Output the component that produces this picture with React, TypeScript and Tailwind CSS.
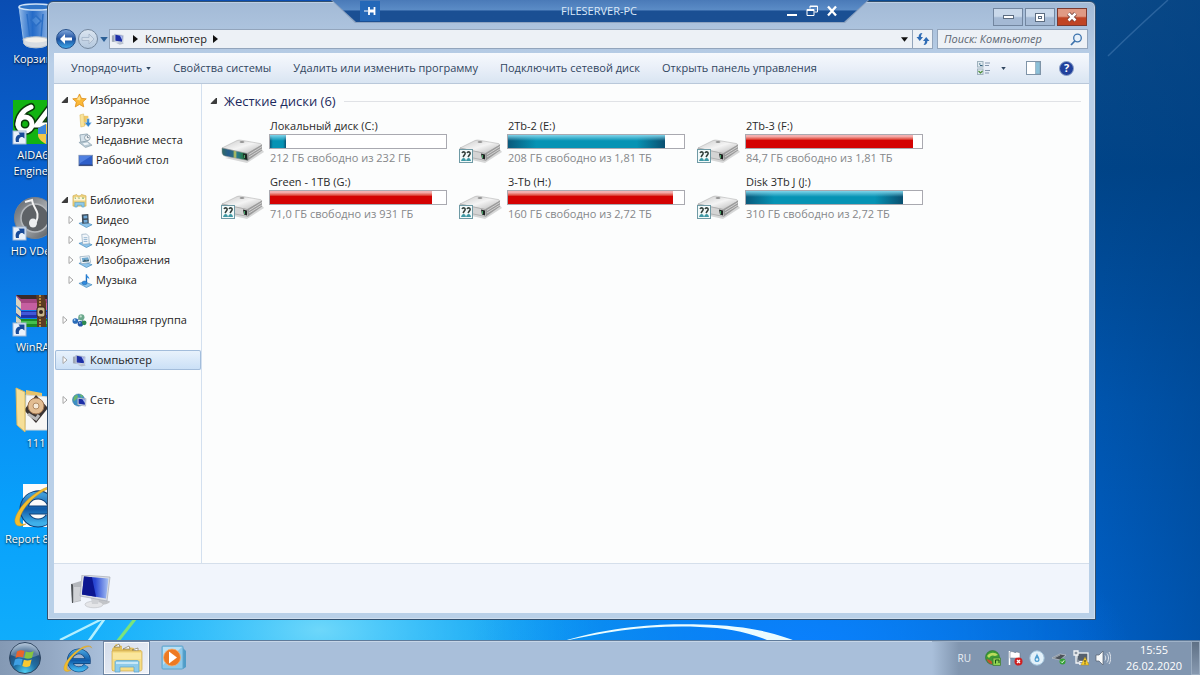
import React from 'react';

type IconProps = { className?: string };

/* ---------- Desktop icons ---------- */

const ShortcutBadge = () => (
  <g>
    <rect x="1" y="33" width="13" height="13" fill="#e9f1fb" stroke="#9fb6d4" strokeWidth="1" />
    <path d="M4 44c-1-4 0-7 4-7.500l-1.500-2h6v6l-2-1.500c-3 0-4 2-3.500 5z" fill="#184a98" />
  </g>
);

const RecycleBinIcon = ({ className }: IconProps) => (
  <svg viewBox="0 0 48 48" className={className}>
    <defs>
      <linearGradient id="bin" x1="0" x2="1">
        <stop offset="0" stopColor="#b9d6f4" stopOpacity="0.8" />
        <stop offset="0.4" stopColor="#3f86da" stopOpacity="0.5" />
        <stop offset="1" stopColor="#dcebfb" stopOpacity="0.8" />
      </linearGradient>
    </defs>
    <path d="M7 5l5 37c3 5 21 5 24 0l5-37z" fill="url(#bin)" stroke="#8fb9e8" strokeWidth="1" />
    <path d="M15 12l3 24M31 12l-2 24M19 18l5-4 5 5-5 5z" stroke="#2b6fc6" strokeWidth="1.500" fill="#5c9ae0" fillOpacity="0.500" />
    <path d="M11 37c6-3 20-3 26 0l-1 5c-3 5-21 5-24 0z" fill="#d8dde2" stroke="#b9c3cc" />
    <ellipse cx="24" cy="38" rx="11" ry="2.500" fill="#f2f0ea" />
    <ellipse cx="24" cy="5" rx="17" ry="3" fill="#2f74c8" stroke="#cfe2f7" strokeWidth="1.500" />
  </svg>
);

const AidaIcon = ({ className }: IconProps) => (
  <svg viewBox="0 0 48 48" className={className}>
    <rect x="1" y="2" width="46" height="44" fill="#12b312" />
    <g fill="none" stroke="#0a3a0a" strokeWidth="8" strokeLinecap="round">
      <path d="M19 9c-8 3-13 10-13 18" />
      <circle cx="13" cy="26" r="7" />
      <path d="M38 34V10L25 27h18" />
    </g>
    <g fill="none" stroke="#fff" strokeWidth="5" strokeLinecap="round">
      <path d="M19 9c-8 3-13 10-13 18" />
      <circle cx="13" cy="26" r="7" />
      <path d="M38 34V10L25 27h18" />
    </g>
    <path d="M26 30l8-4 8 4v7c0 4-4 7-8 9-4-2-8-5-8-9z" fill="#f4c848" />
    <path d="M26 30l8-4v10h-8z" fill="#3b86dc" />
    <path d="M34 36h8c0 5-4 8-8 10z" fill="#3b86dc" />
    <ShortcutBadge />
  </svg>
);

const AudioDeckIcon = ({ className }: IconProps) => (
  <svg viewBox="0 0 48 48" className={className}>
    <defs>
      <linearGradient id="deck" x1="0" y1="0" x2="1" y2="1">
        <stop offset="0" stopColor="#5a5f64" />
        <stop offset="0.5" stopColor="#a6aaae" />
        <stop offset="1" stopColor="#4a4e52" />
      </linearGradient>
    </defs>
    <circle cx="23" cy="24" r="20.500" fill="url(#deck)" stroke="#7b8086" />
    <circle cx="23" cy="24" r="14" fill="#5e6266" stroke="#b4b8bc" strokeWidth="1.500" />
    <path d="M13 8l7-2c1 9 9 11 4 22" fill="none" stroke="#f3f3f3" strokeWidth="2" />
    <ellipse cx="21" cy="29" rx="4" ry="4.500" fill="#eceef0" />
    <ShortcutBadge />
  </svg>
);

const WinRarIcon = ({ className }: IconProps) => (
  <svg viewBox="0 0 48 48" className={className}>
    <path d="M4 5l38 0 5 7v8H9z" fill="#a3447f" />
    <path d="M4 5h38l4 4H9z" fill="#3a2a2a" />
    <path d="M9 13h38v7H9z" fill="#c65fa0" />
    <path d="M4 16l5 5h38v7H9l-5-4z" fill="#2030a8" />
    <path d="M9 22h38v3H9z" fill="#4258d8" />
    <path d="M4 26l5 3h38v8H9l-5-4z" fill="#1c8a26" />
    <path d="M9 31h38v3H9z" fill="#46c04c" />
    <path d="M4 6l5 6v7l-5-4zM4 16l5 5v6l-5-4zM4 26l5 4v6l-5-4z" fill="#d9d2bd" />
    <path d="M24 5h8l2 7v25h-9V12z" fill="#5d3c22" />
    <path d="M28 5v32" stroke="#d8a850" strokeWidth="1.500" strokeDasharray="2 1" />
    <rect x="25" y="17" width="8" height="10" rx="2" fill="#c9b68a" stroke="#33231a" />
    <circle cx="29" cy="22" r="2" fill="#33231a" />
    <ShortcutBadge />
  </svg>
);

const FolderDiskIcon = ({ className }: IconProps) => (
  <svg viewBox="0 0 48 48" className={className}>
    <path d="M14 4l16 3v8L14 40z" fill="#e6c36a" />
    <path d="M14 9l34 3v32H13z" fill="#f7f7f5" stroke="#d8d8d4" />
    <path d="M24 9l12 13-12 15-12-13z" fill="#3a3331" />
    <circle cx="24" cy="20" r="8" fill="#e2bd92" stroke="#9d7450" />
    <circle cx="24" cy="20" r="3" fill="#f5ead9" stroke="#b08a62" />
    <path d="M16 28l8 5 3-4" stroke="#b8b8b8" strokeWidth="3" fill="none" />
    <path d="M4 2l9 4v40l-8-7z" fill="#f6df98" stroke="#dcb95e" />
  </svg>
);

const IeGlyph = ({ id }: { id: string }) => (
  <g>
    <defs>
      <linearGradient id={id} x1="0" y1="0" x2="0" y2="1">
        <stop offset="0" stopColor="#3f9ad8" />
        <stop offset="0.5" stopColor="#0f5aa8" />
        <stop offset="1" stopColor="#3fb0ea" />
      </linearGradient>
    </defs>
    <path d="M14 28H40A14 14 0 1 0 37.500 35" fill="none" stroke="#0d3f78" strokeWidth="9" />
    <path d="M14 28H40A14 14 0 1 0 37.500 35" fill="none" stroke={`url(#${id})`} strokeWidth="7" />
    <path
      d="M46 8c-1-5-8-5-17 0C16 15 5 28 3 37c-1 7 4 9 11 5-5 1-7-1-6-6C10 27 20 16 30 10c8-5 14-6 16-2z"
      fill="#f2bd2e"
      stroke="#c9901a"
      strokeWidth="0.500"
    />
  </g>
);

const ReportIcon = ({ className }: IconProps) => (
  <svg viewBox="0 0 48 48" className={className}>
    <path d="M11 2h36v43H11z" fill="#fbfbfb" />
    <IeGlyph id="ie-report" />
  </svg>
);

/* ---------- Navigation pane icons ---------- */

const StarIcon = ({ className }: IconProps) => (
  <svg viewBox="0 0 16 16" className={className}>
    <path d="M8 1l2.100 4.700 5.100.5-3.800 3.500 1.100 5.100L8 12.200l-4.500 2.600 1.100-5.100L.8 6.200l5.100-.5z" fill="#fbb938" stroke="#d98a14" strokeWidth="0.800" />
    <path d="M8 3l1.300 3.500L8 8 5 7z" fill="#fee08e" />
  </svg>
);

const DownloadsIcon = ({ className }: IconProps) => (
  <svg viewBox="0 0 16 16" className={className}>
    <path d="M6 3h5v10H6z" fill="#efc868" />
    <path d="M2 2l4-1 1 13-4 1z" fill="#f8e39a" stroke="#d9b04e" strokeWidth="0.500" />
    <path d="M9.500 6H12v4h2.500L11 15 7 10h2.500z" fill="#2f83cf" stroke="#d5e8f8" strokeWidth="0.500" />
  </svg>
);

const RecentIcon = ({ className }: IconProps) => (
  <svg viewBox="0 0 16 16" className={className}>
    <path d="M2 2l8-1 1 7-8 2z" fill="#d6e2ea" stroke="#8299a8" strokeWidth="0.800" />
    <circle cx="10" cy="5" r="3" fill="#f3f6f8" stroke="#7c92a0" strokeWidth="0.800" />
    <path d="M10 3v2h2" stroke="#40586a" strokeWidth="0.700" fill="none" />
    <path d="M1 10l9-1 5 4-7 2.500z" fill="#b7c9d4" stroke="#7e95a4" strokeWidth="0.600" />
    <path d="M5 11l5-1 2 2-5 1z" fill="#eef4f8" />
  </svg>
);

const DesktopIcon = ({ className }: IconProps) => (
  <svg viewBox="0 0 16 16" className={className}>
    <rect x="1" y="2.500" width="14.500" height="11" fill="#2e5fc9" stroke="#7f93b4" strokeWidth="1" />
    <path d="M1.500 3h13L2 11z" fill="#4f80e0" />
    <path d="M1 13h14.500" stroke="#1f2f5c" strokeWidth="1" />
  </svg>
);

const LibrariesIcon = ({ className }: IconProps) => (
  <svg viewBox="0 0 16 16" className={className}>
    <path d="M1 3l4-1.500 1 1.500h3l1-1.500 5 1.500v11H1z" fill="#eed27e" stroke="#c9a548" strokeWidth="0.600" />
    <path d="M2 5l3-1 1.500 1 3-1 1.500 1 3 0v3H2z" fill="#fdf5d6" />
    <path d="M3 5.500h1M7 5.500h1M11 5.500h1.500" stroke="#3a8a3a" strokeWidth="1" />
    <path d="M3 10h10v5h-2.500v-2h-5v2H3z" fill="#8fcaea" stroke="#4f99c6" strokeWidth="0.600" />
  </svg>
);

const TrayBase = () => <path d="M1 11l6-1.500 8 3L9 15.500z" fill="#8ec4ea" stroke="#3f86bd" strokeWidth="0.700" />;

const VideoIcon = ({ className }: IconProps) => (
  <svg viewBox="0 0 16 16" className={className}>
    <TrayBase />
    <path d="M4 1.500l7-.5.500 10-7 .5z" fill="#3c4a58" />
    <path d="M5.800 3l4-.3.200 3-4 .2zM6 7.500l4-.3.200 3-4 .2z" fill="#6fa8d6" />
  </svg>
);

const DocumentsIcon = ({ className }: IconProps) => (
  <svg viewBox="0 0 16 16" className={className}>
    <TrayBase />
    <path d="M4 1.500l5-.5 2.500 2.500.500 8-7 .5z" fill="#f2f6fa" stroke="#8ba5bb" strokeWidth="0.700" />
    <path d="M6 5h4M6 7h4M6 9h4" stroke="#7aa3c6" strokeWidth="0.800" />
  </svg>
);

const PicturesIcon = ({ className }: IconProps) => (
  <svg viewBox="0 0 16 16" className={className}>
    <TrayBase />
    <path d="M2 4l10-1 1.500 7-10 1.500z" fill="#f5f9fc" stroke="#86a0b5" strokeWidth="0.700" />
    <path d="M4 5.200l7-.7.800 4.200-6.900 1z" fill="#6fa9cf" />
    <path d="M5 9l2-2 2 1 2.500-1 .3 1.700-6.900 1z" fill="#44606c" />
  </svg>
);

const MusicIcon = ({ className }: IconProps) => (
  <svg viewBox="0 0 16 16" className={className}>
    <TrayBase />
    <path d="M9 1.500v8.500" stroke="#1d6fc0" strokeWidth="1.500" />
    <path d="M9 1c.5 2.500 3.500 2.500 3 6-.6-1.600-1.500-2-3-2.300z" fill="#2f8ade" />
    <ellipse cx="7" cy="10.500" rx="2.700" ry="2" fill="#2f8ade" stroke="#175a9e" strokeWidth="0.500" />
  </svg>
);

const HomegroupIcon = ({ className }: IconProps) => (
  <svg viewBox="0 0 16 16" className={className}>
    <path d="M4 9l6-5 2 7z" fill="none" stroke="#7f9fb8" strokeWidth="1.500" />
    <circle cx="3.500" cy="8.500" r="3" fill="#2a6cb8" />
    <circle cx="10" cy="4.500" r="3.300" fill="#6aa88c" />
    <circle cx="9" cy="11.500" r="3" fill="#2456a8" />
    <circle cx="13" cy="10.500" r="2.500" fill="#2f8a52" />
    <circle cx="9.300" cy="3.600" r="1.200" fill="#c3e0d0" />
    <circle cx="2.800" cy="7.500" r="1" fill="#a9cdf0" />
    <circle cx="8.300" cy="10.500" r="1" fill="#8fb4ea" />
  </svg>
);

const ComputerSmallIcon = ({ className }: IconProps) => (
  <svg viewBox="0 0 16 16" className={className}>
    <path d="M1 4l3-.5v8L1 11z" fill="#9fa8b6" />
    <path d="M4 2.500l10 1.500-.5 8.500L4 11z" fill="#d7dde8" stroke="#9aa5b8" strokeWidth="0.500" />
    <path d="M5 3l8 1.500-.4 6.500L5 10z" fill="#1c2fa6" />
    <path d="M10 4l3 .5-.3 4.500z" fill="#aab9ee" />
    <path d="M6 12.500l5-.5 4 1.200-5 1.300z" fill="#b7bfcc" />
  </svg>
);

const NetworkIcon = ({ className }: IconProps) => (
  <svg viewBox="0 0 16 16" className={className}>
    <circle cx="7" cy="7.500" r="6.500" fill="#3c8fc4" stroke="#2c6d96" strokeWidth="0.500" />
    <path d="M3 3c3-2 4 0 3 2s-3 2-4 4c-1-2 0-5 1-6zM8 1l4 2-2 2z" fill="#69b86f" />
    <path d="M6 5l9 1-.5 8L6 12.500z" fill="#d7dde8" stroke="#8c98ac" strokeWidth="0.500" />
    <path d="M7 6l7 .8-.3 5.700L7 11.500z" fill="#1c2fa6" />
    <path d="M11 6.500l3 .3-.3 4.200z" fill="#aab9ee" />
  </svg>
);

/* ---------- Drive and detail icons ---------- */

const DriveIcon = ({ system }: { system?: boolean }) => (
  <svg viewBox="0 0 44 28" className="h-7 w-11 shrink-0" aria-hidden="true">
    <defs>
      <linearGradient id="drive-top" x1="0" y1="0" x2="1" y2="1">
        <stop offset="0" stopColor="#c9c9c9" />
        <stop offset="0.5" stopColor="#f4f4f4" />
        <stop offset="1" stopColor="#b4b4b4" />
      </linearGradient>
      <linearGradient id="drive-front" x1="0" x2="1">
        <stop offset="0" stopColor="#2f6a66" />
        <stop offset="0.25" stopColor="#255c8c" />
        <stop offset="0.42" stopColor="#2a6a80" />
        <stop offset="0.5" stopColor="#c8cc58" />
        <stop offset="0.58" stopColor="#2a7a90" />
        <stop offset="0.78" stopColor="#247a50" />
        <stop offset="1" stopColor="#262c2e" />
      </linearGradient>
    </defs>
    <path d="M4 22l22 5 17-11-3-4z" fill="#000" fillOpacity="0.150" />
    <path d="M1 12L16 4.500c1-.5 3-.5 4-.3l19 3.300c2 .4 2 1.500 1 2.200L26 17.500z" fill="url(#drive-top)" stroke="#a9a9a9" strokeWidth="0.500" />
    <path d="M26 17.500L41 8.500v6L27 24.500z" fill="#9b9b9b" />
    <path d="M28 18.500l13-8M28 21l13-8" stroke="#dedede" strokeWidth="0.800" />
    <path d="M1 12l25 5.500 1 7L4 20c-2-.5-3-2-3-4z" fill={system ? 'url(#drive-front)' : '#d4d4d4'} stroke="#8f8f8f" strokeWidth="0.500" />
    <path d="M22 17.500l4 1v5l-3-1z" fill="#1d2220" />
    <path d="M23.500 19v3" stroke="#52c87a" strokeWidth="0.800" />
    <ellipse cx="21" cy="6" rx="2.500" ry="0.800" fill="#777" />
    {!system && (
      <g>
        <rect x="0.500" y="13.500" width="13" height="13" fill="#f3fafa" stroke="#6f9aa5" />
        <path d="M3 17c1-2 4-1 3 1l-2 3M8 17c1-2 4-1 3 1l-2 3" stroke="#34403c" strokeWidth="1.500" fill="none" />
        <path d="M2 25c1-4 4.500-4 5 0zM7 25c1-4 4.500-4 5 0z" fill="#3f98a4" />
      </g>
    )}
  </svg>
);

const ComputerLargeIcon = ({ className }: IconProps) => (
  <svg viewBox="0 0 40 34" className={className}>
    <defs>
      <linearGradient id="screen" x1="0" x2="1">
        <stop offset="0" stopColor="#1522a6" />
        <stop offset="0.5" stopColor="#2b49d4" />
        <stop offset="1" stopColor="#a9c3f4" />
      </linearGradient>
    </defs>
    <path d="M0 9l10-3v20L1 28z" fill="#b4b7bc" />
    <path d="M0 9l2 .5V28L1 28z" fill="#4f5357" />
    <path d="M3 12h7v13l-7 2z" fill="#d0d2d6" />
    <path d="M26 24l12 2c3 1-2 4-8 4z" fill="#c2c4c8" />
    <ellipse cx="23" cy="29.500" rx="9" ry="3.300" fill="#e4e5e8" stroke="#b9bbc0" strokeWidth="0.600" />
    <path d="M20 23h8l-1 6h-6z" fill="#cfd1d5" />
    <path d="M11 0l28 2-3 24L9 21z" fill="#dcdfe4" stroke="#a6abb4" strokeWidth="0.700" />
    <path d="M13 1.500l24.500 2L35 23.500 11 19.500z" fill="url(#screen)" />
    <path d="M13 1.500l8 .7 4 19.500-14-2.200z" fill="#0c1690" />
  </svg>
);

/* ---------- Taskbar icons ---------- */

const StartOrb = () => (
  <svg viewBox="0 0 34 34" className="h-[34px] w-[34px]" aria-hidden="true">
    <defs>
      <radialGradient id="orb" cx="0.500" cy="0.950" r="0.900">
        <stop offset="0" stopColor="#4fd0f4" />
        <stop offset="0.4" stopColor="#1f6fa4" />
        <stop offset="0.75" stopColor="#24507c" />
        <stop offset="1" stopColor="#8faac6" />
      </radialGradient>
    </defs>
    <circle cx="17" cy="17" r="15.500" fill="url(#orb)" stroke="#2e4560" strokeWidth="1" />
    <path d="M3 14a14 12 0 0 1 28 0c-8 4-20 4-28 0z" fill="#fff" fillOpacity="0.250" />
    <path d="M9 10.500c3-1.500 5-1.500 7.500-.5L15 16.500c-2.500-1-5-.8-7.500.5z" fill="#e8642c" />
    <path d="M17.800 10.500c2.500 1.200 5 1 8-.5L24 16.800c-2.500 1.200-5 1.300-7.700.2z" fill="#86c440" />
    <path d="M7 18.500c2.500-1.200 5-1.300 7.600-.3L13 24.500c-2.500-1-4.800-.8-7.500.5z" fill="#3fa0e4" />
    <path d="M15.900 18.700c2.500 1.100 5 1 7.700-.2L22 25c-2.500 1.200-5 1.200-7.700 0z" fill="#f9c832" />
  </svg>
);

const ExplorerIcon = () => (
  <svg viewBox="0 0 34 30" className="h-[30px] w-[34px]" aria-hidden="true">
    <path d="M2 6l4-5 6 2v3h5l1-2 6 1v3l7-1v21H2z" fill="#e3c05c" />
    <path d="M4 4l5-3 1 3zM13 6l6-3 1 3zM22 7l6-2v3z" fill="#fff" stroke="#6e6545" strokeWidth="0.600" />
    <path d="M2 8h29c1 0 1 .5 1 1v17c0 1-.5 2-2 2H4c-1 0-2-.5-2-2z" fill="#f6dd85" stroke="#cda84a" strokeWidth="0.700" />
    <path d="M3 10h28v6H3z" fill="#fae69c" />
    <path d="M5 19c0-1 1-1.500 2-1.500h20c1 0 2 .5 2 1.500v10h-5v-5H10v5H5z" fill="#8ecbea" stroke="#5da3cc" strokeWidth="0.700" />
    <path d="M6 19h22v2H6z" fill="#c8e8f8" />
  </svg>
);

const MediaPlayerIcon = () => (
  <svg viewBox="0 0 26 26" className="h-[26px] w-[26px]" aria-hidden="true">
    <path d="M22 3l3 3v16l-3 2z" fill="#4f9cc8" />
    <rect x="1" y="1" width="21" height="23" rx="1" fill="#8cc8ea" stroke="#5fa4cc" />
    <path d="M2 2h19L2 20z" fill="#b9e0f5" />
    <circle cx="11" cy="12.500" r="8.500" fill="#ee7a22" stroke="#f5ad6c" strokeWidth="0.800" />
    <path d="M8 6.500l8 6-8 6z" fill="#fff" />
  </svg>
);

const TrayUtorrent = () => (
  <svg viewBox="0 0 16 16" className="h-4 w-4" aria-hidden="true">
    <circle cx="7.500" cy="7.500" r="7" fill="#3d9a36" stroke="#246a24" strokeWidth="0.500" />
    <path d="M2 6c3-4 8-4 11-1l-3 1c-2-1-4-1-6 2z" fill="#b9dc5c" />
    <path d="M1.500 9c1 3 3 5 6 5l-1-3-2-1z" fill="#c8502e" />
    <rect x="8" y="8" width="7.500" height="7.500" fill="#8ed050" stroke="#3a7a30" strokeWidth="0.700" />
    <path d="M10.500 13.500V10h3.500v3" stroke="#16501a" fill="none" strokeWidth="1" />
  </svg>
);

const TrayFlag = () => (
  <svg viewBox="0 0 16 16" className="h-4 w-4" aria-hidden="true">
    <path d="M2.500 1v14" stroke="#fff" strokeWidth="1.500" />
    <path d="M3 2c3-1.500 4 1 6 .5V1.800l4 1v5.500c-2 .8-4-.4-5-.2-2 .2-3-.6-5 .2z" fill="#fff" stroke="#5d6b7c" strokeWidth="0.500" />
    <circle cx="11.500" cy="11.500" r="4" fill="#cf1f1f" />
    <path d="M10 10l3 3M13 10l-3 3" stroke="#fff" strokeWidth="1.300" />
  </svg>
);

const TrayDrop = () => (
  <svg viewBox="0 0 16 16" className="h-4 w-4" aria-hidden="true">
    <circle cx="8" cy="8" r="7.200" fill="#e3f1fa" stroke="#9fc0d8" />
    <path d="M8 3c0 2 2.500 4 2.500 6.500a2.500 2.500 0 0 1-5 0C5.500 7 8 5 8 3z" fill="#4f9dd0" />
    <circle cx="8" cy="9.500" r="1.200" fill="#e3f1fa" />
  </svg>
);

const TrayEject = () => (
  <svg viewBox="0 0 16 16" className="h-4 w-4" aria-hidden="true">
    <path d="M1 8l8-4 6 1-6 5z" fill="#4c5258" stroke="#c5cbd2" strokeWidth="0.700" />
    <path d="M3 8l6-3" stroke="#a5adb5" />
    <circle cx="11.500" cy="11.500" r="3" fill="#35a035" />
    <path d="M10 11.500l1.200 1.200 2-2.400" stroke="#fff" strokeWidth="1" fill="none" />
  </svg>
);

const TrayNetwork = () => (
  <svg viewBox="0 0 16 16" className="h-4 w-4" aria-hidden="true">
    <rect x="4" y="3" width="11" height="8.500" fill="#56616e" stroke="#f2f4f6" strokeWidth="1.300" />
    <path d="M1 1h4v4H1zM3 5v8h4M6 14h5" stroke="#f2f4f6" strokeWidth="1.300" fill="#8b96a3" />
    <path d="M12 7l4 8H8z" fill="#f8cf2c" stroke="#a8841a" strokeWidth="0.500" />
    <path d="M12 10v2.500M12 13.300v1" stroke="#222" strokeWidth="1" />
  </svg>
);

const TrayVolume = () => (
  <svg viewBox="0 0 16 16" className="h-4 w-4" aria-hidden="true">
    <path d="M1 5h3l4-4v14l-4-4H1z" fill="#f7f9fa" stroke="#55606e" strokeWidth="0.700" />
    <path d="M10 5.500c1 1.500 1 3.500 0 5M12 3.500c2 2.500 2 6.500 0 9M14 2c2.300 3.500 2.300 8.500 0 12" stroke="#e6ebf0" fill="none" strokeWidth="0.900" />
  </svg>
);

/* ---------- Wallpaper ---------- */

const Wallpaper = () => (
  <svg viewBox="0 0 1200 675" preserveAspectRatio="none" className="absolute inset-0 h-full w-full" aria-hidden="true">
    <defs>
      <linearGradient id="wall-left" x1="0" y1="0" x2="0" y2="1">
        <stop offset="0" stopColor="#0a4db2" />
        <stop offset="0.3" stopColor="#0866d6" />
        <stop offset="0.5" stopColor="#0b86ee" />
        <stop offset="0.75" stopColor="#08a0fb" />
        <stop offset="1" stopColor="#12b0fb" />
      </linearGradient>
      <linearGradient id="wall-right" x1="0" y1="0" x2="0" y2="1">
        <stop offset="0" stopColor="#0b4a88" />
        <stop offset="0.25" stopColor="#004488" />
        <stop offset="0.6" stopColor="#0056b0" />
        <stop offset="1" stopColor="#0062cc" />
      </linearGradient>
      <linearGradient id="wall-fade" x1="0" x2="1">
        <stop offset="0.3" stopColor="#fff" stopOpacity="0" />
        <stop offset="0.9" stopColor="#fff" stopOpacity="1" />
      </linearGradient>
      <linearGradient id="wall-edge" x1="0" x2="1">
        <stop offset="0.9" stopColor="#003e80" stopOpacity="0" />
        <stop offset="1" stopColor="#003e80" stopOpacity="0.400" />
      </linearGradient>
      <radialGradient id="wall-glow" cx="0.500" cy="0.500" r="0.500">
        <stop offset="0" stopColor="#78dcfa" stopOpacity="0.900" />
        <stop offset="1" stopColor="#2cc0fb" stopOpacity="0" />
      </radialGradient>
      <radialGradient id="wall-blue" cx="0.500" cy="0.500" r="0.500">
        <stop offset="0" stopColor="#0a80ff" />
        <stop offset="1" stopColor="#0a80ff" stopOpacity="0" />
      </radialGradient>
      <mask id="wall-mask">
        <rect width="1200" height="675" fill="url(#wall-fade)" />
      </mask>
    </defs>
    <rect width="1200" height="675" fill="url(#wall-left)" />
    <rect width="1200" height="675" fill="url(#wall-right)" mask="url(#wall-mask)" />
    <rect width="1200" height="675" fill="url(#wall-edge)" />
    <ellipse cx="320" cy="630" rx="280" ry="140" fill="url(#wall-glow)" />
    <ellipse cx="800" cy="650" rx="330" ry="150" fill="url(#wall-blue)" />
    <path d="M60 640l52-26M88 642l20-28" stroke="#b4f0ff" strokeWidth="2.500" />
    <path d="M117 642l22-28" stroke="#7be37a" strokeWidth="3" />
    <path d="M560 642C620 624 670 624 700 624.500c50 1 80 9 106 21h-26C750 632 730 628 700 627c-50-2-90 4-140 15z" fill="#eafcff" />
    <path d="M1108 56Q1140 25 1168 0" stroke="#5d8fc4" strokeOpacity="0.400" strokeWidth="1.500" fill="none" />
  </svg>
);

/* ---------- Data ---------- */

const shortcuts = [
  { label: 'Корзина', Icon: RecycleBinIcon },
  { label: 'AIDA64 Engineer', Icon: AidaIcon },
  { label: 'HD VDeck', Icon: AudioDeckIcon },
  { label: 'WinRAR', Icon: WinRarIcon },
  { label: '111', Icon: FolderDiskIcon },
  { label: 'Report 8.0.1', Icon: ReportIcon },
];

const commands = [
  'Свойства системы',
  'Удалить или изменить программу',
  'Подключить сетевой диск',
  'Открыть панель управления',
];

type TreeItem = { label: string; Icon: React.FC<IconProps>; expandable?: boolean };
type TreeGroup = TreeItem & { open?: boolean; selected?: boolean; items?: TreeItem[] };

const tree: TreeGroup[] = [
  {
    label: 'Избранное',
    Icon: StarIcon,
    open: true,
    items: [
      { label: 'Загрузки', Icon: DownloadsIcon },
      { label: 'Недавние места', Icon: RecentIcon },
      { label: 'Рабочий стол', Icon: DesktopIcon },
    ],
  },
  {
    label: 'Библиотеки',
    Icon: LibrariesIcon,
    open: true,
    items: [
      { label: 'Видео', Icon: VideoIcon, expandable: true },
      { label: 'Документы', Icon: DocumentsIcon, expandable: true },
      { label: 'Изображения', Icon: PicturesIcon, expandable: true },
      { label: 'Музыка', Icon: MusicIcon, expandable: true },
    ],
  },
  { label: 'Домашняя группа', Icon: HomegroupIcon },
  { label: 'Компьютер', Icon: ComputerSmallIcon, selected: true },
  { label: 'Сеть', Icon: NetworkIcon },
];

const drives = [
  { name: 'Локальный диск (C:)', info: '212 ГБ свободно из 232 ГБ', used: 9, system: true },
  { name: '2Tb-2 (E:)', info: '208 ГБ свободно из 1,81 ТБ', used: 89 },
  { name: '2Tb-3 (F:)', info: '84,7 ГБ свободно из 1,81 ТБ', used: 95, full: true },
  { name: 'Green - 1TB (G:)', info: '71,0 ГБ свободно из 931 ГБ', used: 92, full: true },
  { name: '3-Tb (H:)', info: '160 ГБ свободно из 2,72 ТБ', used: 94, full: true },
  { name: 'Disk 3Tb J (J:)', info: '310 ГБ свободно из 2,72 ТБ', used: 89 },
];

/* ---------- Components ---------- */

const Twisty = ({ open }: { open?: boolean }) => (
  <svg viewBox="0 0 8 10" className="h-[10px] w-2" aria-hidden="true">
    {open ? (
      <path d="M6.500 2v5.500H1z" fill="#3c3c3c" stroke="#222" strokeWidth="0.800" />
    ) : (
      <path d="M2 1.500L6 5 2 8.500z" fill="#fff" stroke="#a6a6a6" strokeWidth="1" />
    )}
  </svg>
);

const Caret = ({ className }: IconProps) => (
  <svg viewBox="0 0 6 4" className={className} aria-hidden="true">
    <path d="M0 0h6L3 4z" fill="currentColor" />
  </svg>
);

const Crumb = () => (
  <svg viewBox="0 0 5 8" className="h-2 w-[5px]" aria-hidden="true">
    <path d="M0 0l5 4-5 4z" fill="#111" />
  </svg>
);

const ConnectionBar = () => (
  <div className="absolute top-0 left-1/2 z-20 h-[23px] w-[538px] -translate-x-1/2 bg-[#8da3c0] [clip-path:polygon(0_0,100%_0,calc(100%-24px)_100%,24px_100%)]">
    <div className="mx-px flex h-[22px] items-center bg-linear-to-b from-[#4a7ab8] via-[#5b8cc6] via-45% to-[#1a4f93] to-50% pr-[30px] pl-7 text-white [clip-path:polygon(0_0,100%_0,calc(100%-24px)_100%,24px_100%)]">
      <div className="flex flex-1">
        <button type="button" aria-label="Закрепить" className="flex h-[20px] w-5 items-center justify-center bg-[#2468b8]">
          <svg viewBox="0 0 12 12" className="h-3 w-3">
            <path d="M0 6h4" stroke="#fff" strokeWidth="1.200" />
            <path d="M5 2v8M10.500 2v8" stroke="#fff" strokeWidth="1.800" />
            <path d="M5 4.500h5v3H5z" fill="#fff" />
          </svg>
        </button>
      </div>
      <h1 className="text-[11px] leading-4 text-[#dbe8f8]">FILESERVER-PC</h1>
      <div className="flex flex-1 items-center justify-end gap-2">
        <button type="button" aria-label="Свернуть">
          <svg viewBox="0 0 12 12" className="h-3 w-3">
            <path d="M1 10h10" stroke="#fff" strokeWidth="2" />
          </svg>
        </button>
        <button type="button" aria-label="Восстановить">
          <svg viewBox="0 0 12 12" className="h-3 w-3" fill="none" stroke="#fff" strokeWidth="1">
            <path d="M4 3.500V1h7.500v6H8.500" />
            <path d="M4 1.500h7" />
            <path d="M1 4.500h7v6H1zM1 5.500h7" />
          </svg>
        </button>
        <button type="button" aria-label="Закрыть">
          <svg viewBox="0 0 12 12" className="h-3 w-3">
            <path d="M2 1.500l8 9M10 1.500l-8 9" stroke="#fff" strokeWidth="2.300" />
          </svg>
        </button>
      </div>
    </div>
  </div>
);

const CaptionButtons = () => (
  <div className="flex justify-end gap-0.5 pt-1.5 pr-0.5">
    <button type="button" aria-label="Свернуть" className="flex h-[18px] w-[30px] items-center justify-center border border-[#7286a0] bg-linear-to-b from-[#c9d8ea] from-45% to-[#a4b9d4] to-55%">
      <span className="h-1 w-[11px] border border-[#5c6c80] bg-white" />
    </button>
    <button type="button" aria-label="Развернуть" className="flex h-[18px] w-[30px] items-center justify-center border border-[#7286a0] bg-linear-to-b from-[#c9d8ea] from-45% to-[#a4b9d4] to-55%">
      <span className="h-[9px] w-[10px] border border-[#5c6c80] bg-white p-0.5">
        <span className="block h-full border border-[#5c6c80]" />
      </span>
    </button>
    <button type="button" aria-label="Закрыть" className="flex h-[18px] w-[30px] items-center justify-center border border-[#7c3a30] bg-linear-to-b from-[#e09a84] from-45% to-[#c04424] to-55%">
      <svg viewBox="0 0 12 10" className="h-[10px] w-3">
        <path d="M2.500 1.500l7 7M9.500 1.500l-7 7" stroke="#6e3a34" strokeWidth="4" />
        <path d="M2.500 1.500l7 7M9.500 1.500l-7 7" stroke="#fff" strokeWidth="2.500" />
      </svg>
    </button>
  </div>
);

const AddressRow = () => (
  <div className="flex h-5 items-center">
    <div className="flex w-[55px] shrink-0 items-center pl-0.5">
      <button type="button" aria-label="Назад" className="flex h-5 w-5 shrink-0 items-center justify-center rounded-full border border-[#24508c] bg-linear-to-b from-[#7fa6da] via-[#1c4e9e] via-50% to-[#3fa8e8]">
        <svg viewBox="0 0 14 12" className="h-3 w-[14px]">
          <path d="M6 1v3.500h7v3H6V11L1 6z" fill="#fff" />
        </svg>
      </button>
      <button type="button" aria-label="Вперед" className="ml-0.5 flex h-5 w-5 shrink-0 items-center justify-center rounded-full border border-[#75889e] bg-linear-to-b from-[#dbe5f0] to-[#b4c8de]">
        <svg viewBox="0 0 14 12" className="h-3 w-[14px]">
          <path d="M8 1v3.500H1v3h7V11l5-5z" fill="#d3deea" stroke="#a3b4c8" strokeWidth="0.800" />
        </svg>
      </button>
      <button type="button" aria-label="Последние страницы" className="ml-0.5 shrink-0 text-[#2c6097]">
        <Caret className="h-[5px] w-2" />
      </button>
    </div>
    <div className="flex h-5 flex-1 items-center border border-[#93a5bc] bg-[#edf1f6]">
      <ComputerSmallIcon className="ml-px h-[14px] w-[14px]" />
      <span className="ml-2"><Crumb /></span>
      <button type="button" className="ml-[7px] text-[11px] leading-4 text-[#1c1c1c]">Компьютер</button>
      <span className="ml-1.5"><Crumb /></span>
      <button type="button" aria-label="Предыдущие расположения" className="ml-auto mr-1 text-[#111]">
        <Caret className="h-[5px] w-[7px]" />
      </button>
      <button type="button" aria-label="Обновить" className="flex h-full w-5 items-center justify-center border-l border-[#93a5bc]">
        <svg viewBox="0 0 14 14" className="h-[14px] w-[14px]" fill="#2f6cb5">
          <path d="M6.500 1C3.500 1 2.600 2.800 2.600 5H.5l3.300 4L7 5H5c0-1.500.4-2.700 1.500-4z" />
          <path d="M7.500 13c3 0 3.900-1.800 3.900-4h2.100l-3.300-4L7 9h2c0 1.500-.4 2.700-1.500 4z" />
        </svg>
      </button>
    </div>
    <div className="ml-1 mr-px flex h-5 w-[151px] items-center border border-[#93a5bc] bg-[#edf1f6] pr-1">
      <input
        type="text"
        aria-label="Поиск"
        placeholder="Поиск: Компьютер"
        className="h-[18px] w-0 flex-1 bg-transparent pl-1.5 text-[11px] leading-[18px] italic outline-none placeholder:text-[#5c6672]"
      />
      <svg viewBox="0 0 13 13" className="h-[13px] w-[13px]" aria-hidden="true">
        <circle cx="7.500" cy="5" r="3.800" fill="#e6f0fa" stroke="#3d73ad" strokeWidth="1.300" />
        <path d="M4.800 8L1 12" stroke="#3d73ad" strokeWidth="1.800" />
      </svg>
    </div>
  </div>
);

const Toolbar = () => (
  <div className="flex h-[31px] items-center border-b border-[#b9c8da] bg-linear-to-b from-[#f6f9fd] via-[#e9eff8] via-50% to-[#d9e5f2] pr-[15px] pl-[17px] text-[11px] leading-4 text-[#31465f]">
    <div className="flex gap-[22px]">
      <button type="button" className="flex items-center gap-1 whitespace-nowrap">
        Упорядочить
        <Caret className="h-[3px] w-[5px]" />
      </button>
      {commands.map((command) => (
        <button key={command} type="button" className="whitespace-nowrap">
          {command}
        </button>
      ))}
    </div>
    <div className="ml-auto flex items-center">
      <button type="button" aria-label="Изменить представление" className="flex items-center gap-2.5">
        <svg viewBox="0 0 14 14" className="h-[14px] w-[14px]">
          <rect x="0.500" y="0.500" width="5.500" height="5.500" fill="#dfe9ef" stroke="#9fb2bd" />
          <rect x="0.500" y="8" width="5.500" height="5.500" fill="#dfe9ef" stroke="#9fb2bd" />
          <path d="M2 3h1.500M3 4.500h2.500" stroke="#33607e" strokeWidth="1.200" />
          <path d="M1.500 10l2 2 2-2" stroke="#4c8c3a" strokeWidth="1.200" fill="none" />
          <path d="M8 2h5M8 4.500h4M8 9.500h5M8 12h4" stroke="#8496ad" />
        </svg>
        <Caret className="h-[3px] w-[5px]" />
      </button>
      <button type="button" aria-label="Область просмотра" className="ml-5">
        <svg viewBox="0 0 15 14" className="h-[14px] w-[15px]">
          <rect x="0.500" y="0.500" width="14" height="13" fill="#fff" stroke="#7f94a8" />
          <path d="M9.500 1H14v12H9.500z" fill="#8cc0d8" stroke="#7f94a8" strokeWidth="0.500" />
        </svg>
      </button>
      <button type="button" aria-label="Справка" className="ml-[18px] flex h-[15px] w-[15px] items-center justify-center rounded-full border border-[#8ea2c8] bg-[#21409c] text-[11px] leading-3 font-bold text-white">
        ?
      </button>
    </div>
  </div>
);

const NavigationPane = () => (
  <nav className="w-[148px] shrink-0 border-r border-[#d3e0ef] pt-1.5 text-[11px] text-[#1e1e1e]">
    <ul className="flex flex-col gap-5">
      {tree.map(({ label, Icon, open, selected, items }) => (
        <li key={label}>
          <div
            className={
              selected
                ? 'ml-px flex h-5 items-center rounded-xs bg-linear-to-b from-[#eaf3fc] to-[#c9dff6] pl-1.5 ring-1 ring-[#a3bddb] ring-inset'
                : 'ml-px flex h-5 items-center pl-1.5'
            }
          >
            <button type="button" aria-label={label}>
              <Twisty open={open} />
            </button>
            <a href="#" className="flex items-center gap-[3px] pl-[3px] whitespace-nowrap">
              <Icon className="h-[15px] w-[15px]" />
              {label}
            </a>
          </div>
          {items && (
            <ul>
              {items.map((item) => (
                <li key={item.label} className="flex h-5 items-center pl-[13px]">
                  {item.expandable ? (
                    <button type="button" aria-label={item.label}>
                      <Twisty />
                    </button>
                  ) : (
                    <span className="w-2" />
                  )}
                  <a href="#" className="flex items-center gap-[3px] pl-[3px] whitespace-nowrap">
                    <item.Icon className="h-[15px] w-[15px]" />
                    {item.label}
                  </a>
                </li>
              ))}
            </ul>
          )}
        </li>
      ))}
    </ul>
  </nav>
);

const DriveList = () => (
  <main className="min-w-0 flex-1 pt-[7px] pr-2 pl-2">
    <div className="flex items-center">
      <button type="button" aria-label="Свернуть группу">
        <Twisty open />
      </button>
      <h2 className="ml-1.5 text-[13px] leading-5 text-[#1c2a5e]">Жесткие диски (6)</h2>
      <div className="ml-2 h-px flex-1 bg-[#e0e2e6]" />
    </div>
    <ul className="grid grid-cols-[repeat(auto-fill,238px)] gap-y-2 pt-[7px] pl-[11px]">
      {drives.map((drive) => (
        <li key={drive.name} className="flex items-end">
          <div className="w-12 shrink-0 pb-0.5">
            <DriveIcon system={drive.system} />
          </div>
          <div className="w-[178px] text-[11px] leading-4 whitespace-nowrap">
            <div className="pl-px text-[#2a2a2a]">{drive.name}</div>
            <div
              role="meter"
              aria-label={drive.name}
              aria-valuemin={0}
              aria-valuemax={100}
              aria-valuenow={drive.used}
              className="h-[15px] border border-[#a9a9b0] bg-white"
            >
              <div
                className={
                  drive.full
                    ? 'h-full bg-linear-to-b from-[#f3b0b0] from-10% via-[#d40202] via-40% to-[#d40202]'
                    : 'h-full bg-[linear-gradient(to_bottom,#7fd4ea_0%,#7fd4ea00_45%),linear-gradient(to_right,#0a5a7c,#0693b4_18%,#0693b4_82%,#0a4f70)]'
                }
                style={{ width: `${drive.used}%` }}
              />
            </div>
            <div className="pt-px pl-px text-[#85878a]">{drive.info}</div>
          </div>
        </li>
      ))}
    </ul>
  </main>
);

const ExplorerWindow = () => (
  <section
    aria-label="Компьютер"
    className="absolute top-px right-[104px] bottom-5 left-[47px] z-10 flex flex-col rounded-t-md border border-[#33506f] bg-linear-to-b from-[#a3bad6] via-[#b9cfe8] via-10% to-[#b9d0e8] px-1.5 pb-1.5 ring-1 ring-white/30 ring-inset"
  >
    <div className="h-[27px] shrink-0">
      <CaptionButtons />
    </div>
    <AddressRow />
    <div className="mt-1 flex min-h-0 flex-1 flex-col bg-[#fcfdfd]">
      <Toolbar />
      <div className="flex min-h-0 flex-1">
        <NavigationPane />
        <DriveList />
      </div>
      <div className="flex h-[50px] shrink-0 items-center border-t border-[#d5dfeb] bg-[#f1f5fc] pt-1.5 pl-[17px]">
        <ComputerLargeIcon className="h-[34px] w-10" />
      </div>
    </div>
  </section>
);

const Taskbar = () => (
  <footer className="relative z-10 flex h-[35px] shrink-0 items-stretch border-t border-[#5f7b9b] bg-[#a9bfda] shadow-[inset_0_1px_0_#c6d6e8]">
    <div className="flex items-center bg-linear-to-r from-[#8499b4] via-[#94a9c4] to-[#a9bfda] pr-2.5 pl-2">
      <button type="button" aria-label="Пуск">
        <StartOrb />
      </button>
      <button type="button" aria-label="Internet Explorer" className="ml-5">
        <svg viewBox="0 0 48 48" className="h-[31px] w-[31px]">
          <IeGlyph id="ie-taskbar" />
        </svg>
      </button>
    </div>
    <button type="button" aria-label="Проводник" className="flex w-[47px] items-center justify-center border border-[#6f86a3] bg-linear-to-br from-[#d3dcea] to-[#f0f3f9] ring-1 ring-white/80 ring-inset">
      <ExplorerIcon />
    </button>
    <button type="button" aria-label="Проигрыватель Windows Media" className="ml-[11px]">
      <MediaPlayerIcon />
    </button>
    <div className="ml-auto flex items-center bg-linear-to-r from-[#a9bfda] to-[#8196b0] to-10% pl-[26px] text-[11px] leading-4 text-white shadow-[inset_0_1px_0_#9fb2c8]">
      <button type="button" className="mr-3.5 text-[10px] text-[#e8eef5]">RU</button>
      <div className="flex items-center gap-1.5">
        <button type="button" aria-label="Загрузки музыки"><TrayUtorrent /></button>
        <button type="button" aria-label="Центр поддержки"><TrayFlag /></button>
        <button type="button" aria-label="Punto"><TrayDrop /></button>
        <button type="button" aria-label="Извлечение устройства"><TrayEject /></button>
        <button type="button" aria-label="Сеть"><TrayNetwork /></button>
        <button type="button" aria-label="Громкость"><TrayVolume /></button>
      </div>
      <button type="button" className="ml-3.5 w-[58px] text-center">
        <time dateTime="2020-02-26T15:55">
          15:55
          <br />
          26.02.2020
        </time>
      </button>
      <button type="button" aria-label="Показать рабочий стол" className="ml-2 w-[9px] self-stretch border border-[#9aacc0] bg-linear-to-b from-[#5f7186] to-[#8799b0]" />
    </div>
  </footer>
);

const App: React.FC = () => {
  return (
    <div className="relative flex h-screen min-h-[520px] flex-col overflow-hidden bg-[#0866d6] font-['Open_Sans','Noto_Sans',sans-serif]">
      <Wallpaper />
      <ConnectionBar />
      <div className="relative min-h-0 flex-1">
        <div className="flex w-[72px] flex-col">
          {shortcuts.map(({ label, Icon }) => (
            <button
              key={label}
              type="button"
              className="flex h-24 flex-col items-center pt-0.5 text-center text-[11px] leading-4 text-white [text-shadow:0_1px_2px_#000]"
            >
              <Icon className="h-12 w-12 shrink-0" />
              <span className="pt-px">{label}</span>
            </button>
          ))}
        </div>
        <ExplorerWindow />
      </div>
      <Taskbar />
    </div>
  );
};

export default App;
